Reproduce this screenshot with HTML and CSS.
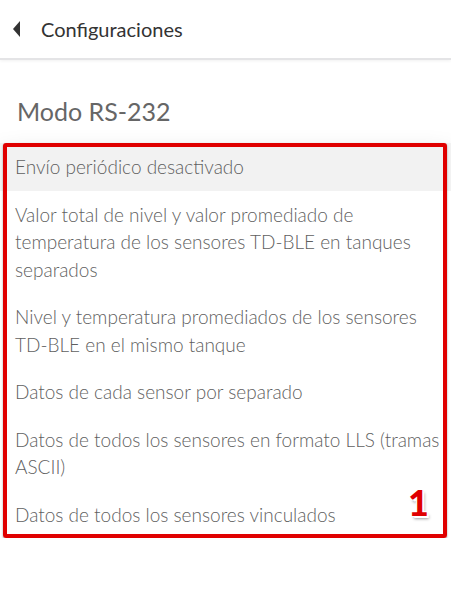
FILE: index.html
```html
<!DOCTYPE html>
<html lang="es">
<head>
  <meta charset="UTF-8">
  <meta name="viewport" content="width=device-width, initial-scale=1.0">
  <title>Modo RS-232</title>
  <link rel="stylesheet" href="styles.css">
</head>
<body>
  <div class="topbar">
    <span class="back"></span>
    <span class="topbar-title">Configuraciones</span>
  </div>

  <div class="section-title">Modo RS-232</div>

  <div class="list-wrap">
    <ul class="options">
      <li class="selected">Envío periódico desactivado</li>
      <li>Valor total de nivel y valor promediado de temperatura de los sensores TD-BLE en tanques separados</li>
      <li>Nivel y temperatura promediados de los sensores TD-BLE en el mismo tanque</li>
      <li>Datos de cada sensor por separado</li>
      <li>Datos de todos los sensores en formato LLS (tramas ASCII)</li>
      <li>Datos de todos los sensores vinculados</li>
    </ul>
    <div class="mark"><span class="mark-num">1</span></div>
  </div>
</body>
</html>
```

FILE: styles.css
```css
body {
  margin: 0;
  font-family: Lato, 'Liberation Sans', sans-serif;
  background: #fff;
  color: #777;
}

.topbar {
  height: 58px;
  display: flex;
  align-items: center;
  padding-left: 13px;
  border-bottom: 2px solid #e4e4e6;
  box-shadow: 0 1px 3px rgba(0,0,0,0.06);
}

.back {
  width: 0;
  height: 0;
  border-top: 8px solid transparent;
  border-bottom: 8px solid transparent;
  border-right: 7px solid #333;
  margin-right: 21px;
}

.topbar-title {
  font-size: 20px;
  color: #333;
}

.section-title {
  font-size: 25px;
  color: #666;
  padding: 36px 17px 17px;
}

.list-wrap {
  position: relative;
  box-shadow: 0 14px 26px rgba(0,0,0,0.2);
}

.options {
  list-style: none;
  margin: 0;
  padding: 0;
  background: #fff;
}

.options li {
  font-size: 19px;
  font-weight: 300;
  line-height: 27.5px;
  padding: 10px 6px 10px 15px;
  color: #5f5f5f;
}

.options li.selected {
  background: #f2f2f2;
}

.mark {
  position: absolute;
  left: 3px;
  right: 4px;
  top: 0;
  bottom: 0;
  border: 4px solid #e00000;
  border-radius: 3px;
  box-shadow: 0 1px 2px rgba(0,0,0,0.4);
}

.mark-num {
  position: absolute;
  right: 14px;
  bottom: 14px;
  font-size: 36px;
  font-weight: 900;
  line-height: 1;
  color: #e00000;
  text-shadow: 0 0 2px #fff, 1px 1px 0 #fff, -1px -1px 0 #fff, 1px -1px 0 #fff, -1px 1px 0 #fff, 2px 2px 0 #fff, 2px 3px 3px rgba(0,0,0,0.4);
}
```
